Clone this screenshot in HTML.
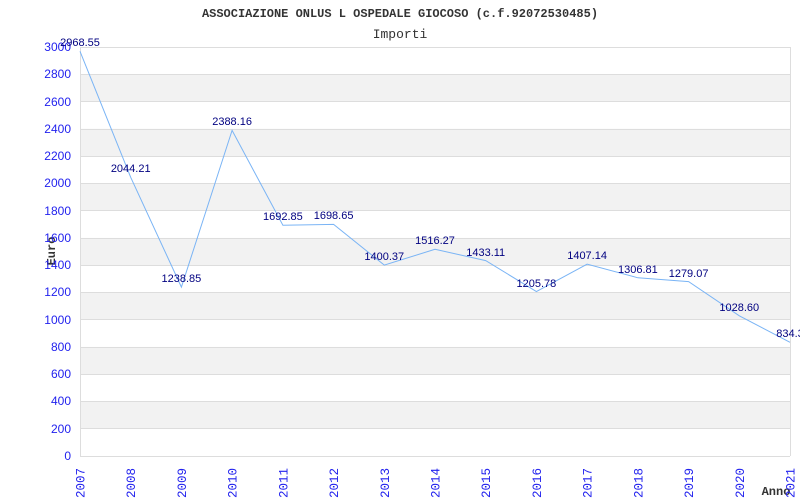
<!DOCTYPE html>
<html><head><meta charset="utf-8"><style>
html,body{margin:0;padding:0;background:#fff;width:800px;height:500px;overflow:hidden}
</style></head><body>
<svg width="800" height="500" xmlns="http://www.w3.org/2000/svg">
<rect width="800" height="500" fill="#fff"/>
<g fill="#f2f2f2">
<rect x="80" y="74.3" width="710" height="27.3"/>
<rect x="80" y="128.8" width="710" height="27.3"/>
<rect x="80" y="183.3" width="710" height="27.3"/>
<rect x="80" y="237.9" width="710" height="27.3"/>
<rect x="80" y="292.4" width="710" height="27.3"/>
<rect x="80" y="346.9" width="710" height="27.3"/>
<rect x="80" y="401.5" width="710" height="27.3"/>
</g>
<g stroke="#dddddd" stroke-width="1">
<line x1="80" x2="790" y1="47.5" y2="47.5"/>
<line x1="80" x2="790" y1="74.5" y2="74.5"/>
<line x1="80" x2="790" y1="101.5" y2="101.5"/>
<line x1="80" x2="790" y1="129.5" y2="129.5"/>
<line x1="80" x2="790" y1="156.5" y2="156.5"/>
<line x1="80" x2="790" y1="183.5" y2="183.5"/>
<line x1="80" x2="790" y1="210.5" y2="210.5"/>
<line x1="80" x2="790" y1="238.5" y2="238.5"/>
<line x1="80" x2="790" y1="265.5" y2="265.5"/>
<line x1="80" x2="790" y1="292.5" y2="292.5"/>
<line x1="80" x2="790" y1="319.5" y2="319.5"/>
<line x1="80" x2="790" y1="347.5" y2="347.5"/>
<line x1="80" x2="790" y1="374.5" y2="374.5"/>
<line x1="80" x2="790" y1="401.5" y2="401.5"/>
<line x1="80" x2="790" y1="428.5" y2="428.5"/>
<line x1="80" x2="790" y1="456.5" y2="456.5"/>
<line x1="80.5" x2="80.5" y1="47" y2="456"/>
<line x1="790.5" x2="790.5" y1="47" y2="456"/>
</g>
<polyline fill="none" stroke="#7ab4f5" stroke-width="1" points="80,51.3 130.7,177.3 181.4,287.1 232.1,130.4 282.9,225.2 333.6,224.4 384.3,265.1 435,249.3 485.7,260.6 536.4,291.6 587.1,264.2 637.9,277.8 688.6,281.6 739.3,315.8 790,342.3"/>
<g font-family="Liberation Mono, monospace" fill="#333" text-anchor="middle">
<text x="400" y="17" font-size="12" font-weight="bold">ASSOCIAZIONE ONLUS L OSPEDALE GIOCOSO (c.f.92072530485)</text>
<text x="400" y="38" font-size="13">Importi</text>
<text transform="translate(55,251) rotate(-90)" font-size="12" font-weight="bold">Euro</text>
<text x="776" y="495" font-size="12" font-weight="bold">Anno</text>
</g>
<g font-family="Liberation Sans, sans-serif" font-size="12" fill="#2222ee" text-anchor="end">
<text x="71" y="51">3000</text><text x="71" y="78">2800</text><text x="71" y="106">2600</text>
<text x="71" y="133">2400</text><text x="71" y="160">2200</text><text x="71" y="187">2000</text>
<text x="71" y="215">1800</text><text x="71" y="242">1600</text><text x="71" y="269">1400</text>
<text x="71" y="296">1200</text><text x="71" y="324">1000</text><text x="71" y="351">800</text>
<text x="71" y="378">600</text><text x="71" y="405">400</text><text x="71" y="433">200</text>
<text x="71" y="460">0</text>
</g>
<g font-family="Liberation Mono, monospace" font-size="12.5" fill="#2222ee" text-anchor="end">
<text transform="translate(84.5,468) rotate(-90)">2007</text>
<text transform="translate(135.2,468) rotate(-90)">2008</text>
<text transform="translate(185.9,468) rotate(-90)">2009</text>
<text transform="translate(236.6,468) rotate(-90)">2010</text>
<text transform="translate(287.4,468) rotate(-90)">2011</text>
<text transform="translate(338.1,468) rotate(-90)">2012</text>
<text transform="translate(388.8,468) rotate(-90)">2013</text>
<text transform="translate(439.5,468) rotate(-90)">2014</text>
<text transform="translate(490.2,468) rotate(-90)">2015</text>
<text transform="translate(540.9,468) rotate(-90)">2016</text>
<text transform="translate(591.6,468) rotate(-90)">2017</text>
<text transform="translate(642.4,468) rotate(-90)">2018</text>
<text transform="translate(693.1,468) rotate(-90)">2019</text>
<text transform="translate(743.8,468) rotate(-90)">2020</text>
<text transform="translate(794.5,468) rotate(-90)">2021</text>
</g>
<g font-family="Liberation Sans, sans-serif" font-size="11" fill="#000080" text-anchor="middle">
<text x="80" y="46">2968.55</text>
<text x="130.7" y="172">2044.21</text>
<text x="181.4" y="282">1238.85</text>
<text x="232.1" y="125">2388.16</text>
<text x="282.9" y="220">1692.85</text>
<text x="333.6" y="219">1698.65</text>
<text x="384.3" y="260">1400.37</text>
<text x="435" y="244">1516.27</text>
<text x="485.7" y="256">1433.11</text>
<text x="536.4" y="287">1205.78</text>
<text x="587.1" y="259">1407.14</text>
<text x="637.9" y="273">1306.81</text>
<text x="688.6" y="277">1279.07</text>
<text x="739.3" y="311">1028.60</text>
<text x="790" y="337">834.3</text>
</g>
</svg>
</body></html>
